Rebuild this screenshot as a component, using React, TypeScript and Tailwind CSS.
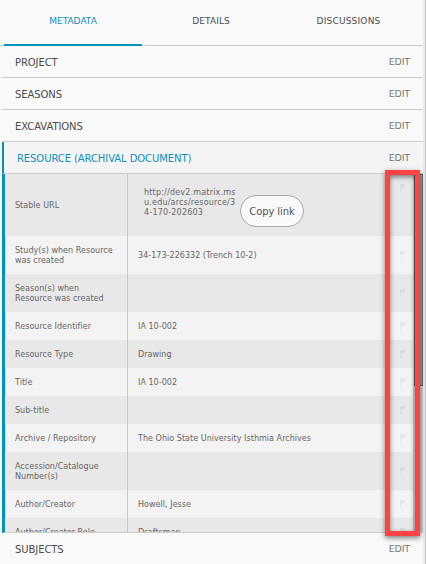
import type { ReactNode } from 'react';

type Field = { label: ReactNode; value?: ReactNode; height: string };

const fields: Field[] = [
  { label: <>Study(s) when Resource<br />was created</>, value: '34-173-226332 (Trench 10-2)', height: 'h-[38px]' },
  { label: <>Season(s) when<br />Resource was created</>, height: 'h-[38px]' },
  { label: 'Resource Identifier', value: 'IA 10-002', height: 'h-7' },
  { label: 'Resource Type', value: 'Drawing', height: 'h-7' },
  { label: 'Title', value: 'IA 10-002', height: 'h-7' },
  { label: 'Sub-title', height: 'h-7' },
  { label: 'Archive / Repository', value: 'The Ohio State University Isthmia Archives', height: 'h-7' },
  { label: <>Accession/Catalogue<br />Number(s)</>, height: 'h-[38px]' },
  { label: 'Author/Creator', value: 'Howell, Jesse', height: 'h-7' },
  { label: 'Author/Creator Role', value: 'Draftsman', height: 'h-7' },
];

function Flag() {
  return (
    <svg className="mr-2 h-2 w-[5px] shrink-0" viewBox="0 0 5 8" fill="#000" fillOpacity="0.05" shapeRendering="crispEdges">
      <path d="M0 0h5v3H3v1H1v4H0z" />
    </svg>
  );
}

function Section({ title, active = false }: { title: string; active?: boolean }) {
  return (
    <div
      className={
        active
          ? 'flex h-8 shrink-0 items-center justify-between border-b border-l-2 border-[#ccc] border-l-[#0094bc] bg-[#f4f4f4] pr-[13px] pl-[13px] text-[#0d8fc0]'
          : 'flex h-8 shrink-0 items-center justify-between border-b border-[#ccc] bg-[#f9f9f9] pr-[13px] pl-[13px] text-[#4c4c4c]'
      }
    >
      <span className="pt-0.5 text-[10px] tracking-[-0.08px]">{title}</span>
      <span className="pt-px text-[9.5px] tracking-[-0.15px] text-[#777]">EDIT</span>
    </div>
  );
}

function Row({ field, shaded }: { field: Field; shaded: boolean }) {
  return (
    <div
      className={`flex shrink-0 items-center border-l ${shaded ? 'border-[#e8e8e8] bg-[#e8e8e8]' : 'border-[#b8dce8] bg-[#f3f3f3]'} ${field.height}`}
    >
      <div className="flex h-full w-[122px] shrink-0 items-center border-r border-[#c8c8c8] pt-0.5 pl-[9px]">{field.label}</div>
      <div className="grow pt-0.5 pl-2.5">{field.value}</div>
      <Flag />
    </div>
  );
}

export default function App() {
  return (
    <div className="relative flex h-[564px] w-[426px] flex-col overflow-hidden bg-[#f9f9f9] font-['DejaVu_Sans',sans-serif] whitespace-nowrap">
      <div className="flex h-[46px] w-[423px] shrink-0 border-b border-[#ccc] pl-1 text-[9px] text-[#4c4c4c]">
        <div className="-mb-px flex w-[138px] items-center justify-center border-b-2 border-[#0094bc] pb-px text-[#0d8fc0]">METADATA</div>
        <div className="flex w-[138px] items-center justify-center pb-0.5 tracking-[0.1px]">DETAILS</div>
        <div className="flex w-[137px] items-center justify-center pb-0.5 tracking-[0.2px]">DISCUSSIONS</div>
      </div>
      <div className="ml-0.5 flex w-[421px] grow flex-col self-start">
        <Section title="PROJECT" />
        <Section title="SEASONS" />
        <Section title="EXCAVATIONS" />
        <Section title="RESOURCE (ARCHIVAL DOCUMENT)" active />
        <div className="flex h-[359px] shrink-0 overflow-hidden border-b border-l-[3px] border-[#ccc] border-l-[#0094bc]">
          <div className="flex w-[408px] flex-col text-[8px] leading-[10px] tracking-[0.04px] text-[#666]">
            <div className="flex h-[62px] shrink-0 bg-[#e8e8e8]">
              <div className="flex w-[123px] shrink-0 items-center border-r border-[#c8c8c8] pt-0.5 pl-2.5">Stable URL</div>
              <div className="w-[112px] pt-3.5 pl-4 tracking-[0.2px]">
                http://dev2.matrix.ms<br />u.edu/arcs/resource/3<br />4-170-202603
              </div>
              <button className="mt-[21px] h-8 w-16 rounded-full border border-[#aaa] bg-[#f9f9f9] pt-0.5 text-[10px] tracking-[-0.1px] text-[#555]">Copy link</button>
              <div className="flex grow justify-end pt-2.5"><Flag /></div>
            </div>
            {fields.map((field, i) => (
              <Row key={i} field={field} shaded={i % 2 === 1} />
            ))}
          </div>
          <div className="h-full w-2.5 bg-[#ccc] pl-px">
            <div className="h-[212px] border border-[#666] bg-[#999]" />
          </div>
        </div>
        <Section title="SUBJECTS" />
      </div>
      <div className="absolute top-0 right-0 h-full w-[3px] border-r border-[#c4c4c4] bg-[#eaeaea]" />
      <div className="absolute top-[170px] left-[385px] h-[366px] w-[35px] border-[5px] border-[#ff4343] shadow-[0_2px_5px_rgba(0,0,0,0.5),inset_0_2px_5px_rgba(0,0,0,0.5)]" />
    </div>
  );
}
